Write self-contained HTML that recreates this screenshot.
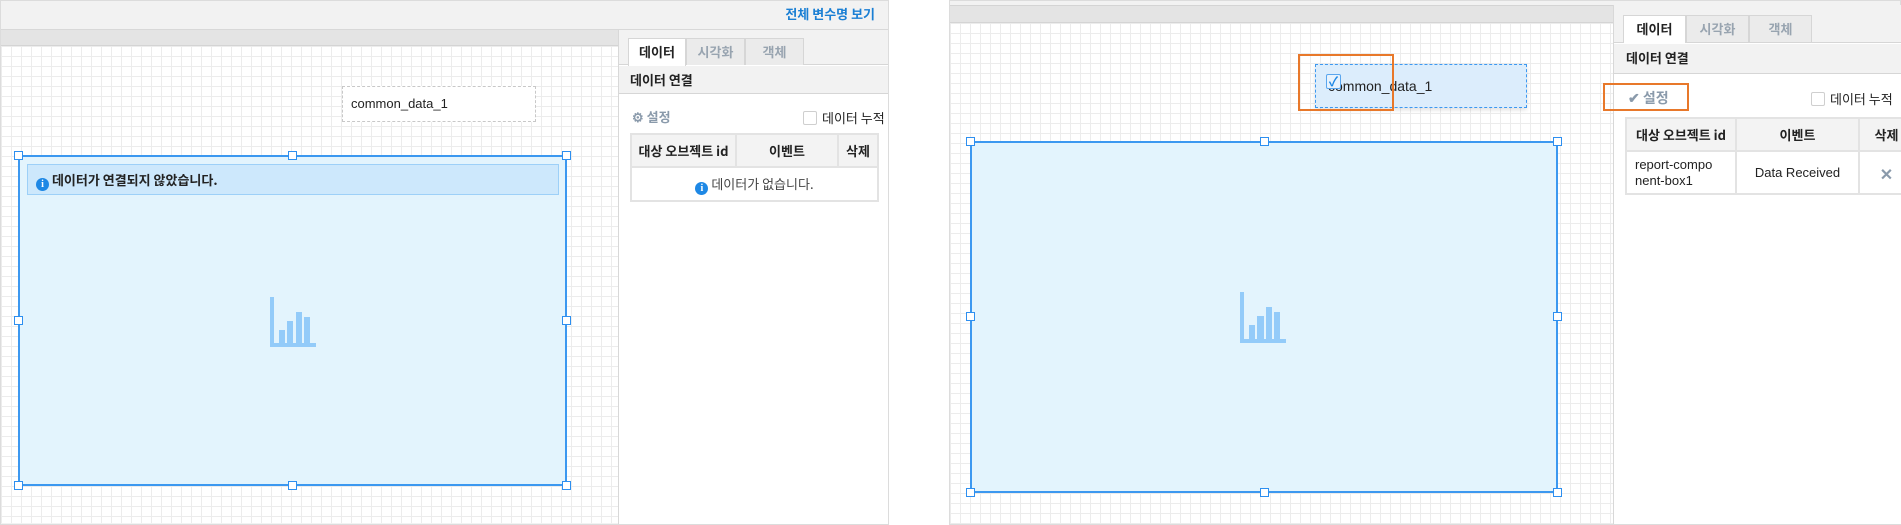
<!DOCTYPE html>
<html><head><meta charset="utf-8">
<style>
*{box-sizing:border-box;margin:0;padding:0}
body{width:1901px;height:525px;background:#fff;position:relative;overflow:hidden;font-family:"Liberation Sans","Noto Sans CJK KR",sans-serif;color:#222}
.a{position:absolute}
.grid{background-color:#fff;background-image:linear-gradient(#ececec 1px,transparent 1px),linear-gradient(90deg,#ececec 1px,transparent 1px);background-size:10px 10px}
.h{position:absolute;width:9px;height:9px;background:#fff;border:1.5px solid #2d8ff0}
.tab{position:absolute;height:27px;border:1px solid #d6d6d6;border-bottom:none;background:#ebebeb;color:#98a4b0;font-size:13px;font-weight:bold;text-align:center;line-height:25px;font-family:"Noto Sans CJK KR",sans-serif}
.tab.on{background:#fff;color:#222;height:28px}
.k{font-family:"Noto Sans CJK KR",sans-serif;font-weight:bold;font-size:13px}
table{border-collapse:collapse;position:absolute;font-family:"Noto Sans CJK KR",sans-serif;font-size:13px}
td,th{border:2px solid #e3e3e3;text-align:center}
th{background:#f3f3f3;font-weight:bold;height:33px}
.cb{position:absolute;width:14px;height:14px;border:1px solid #cfcfcf;border-radius:2px;background:#fff}
.info{display:inline-block;width:13px;height:13px;border-radius:50%;background:#1e88e5;color:#fff;font-size:10px;font-weight:bold;text-align:center;line-height:13px;font-family:"Liberation Serif",serif;vertical-align:-2px}
</style></head><body>

<!-- LEFT SCREEN -->
<div class="a" style="left:0;top:0;width:889px;height:525px;border:1px solid #dcdcdc;background:#f2f2f2"></div>
<div class="a k" style="left:700px;top:4px;width:175px;text-align:right;color:#1a7fd4;font-size:13px">전체 변수명 보기</div>
<div class="a" style="left:1px;top:29px;width:887px;height:1px;background:#d8d8d8"></div>
<div class="a" style="left:1px;top:30px;width:617px;height:16px;background:#e4e4e4;border-bottom:1px solid #d4d4d4"></div>
<div class="a grid" style="left:1px;top:46px;width:617px;height:477px"></div>
<div class="a" style="left:342px;top:86px;width:194px;height:36px;border:1px dashed #c8c8c8;background:#fff;font-size:13px;line-height:34px;padding-left:8px">common_data_1</div>
<div class="a" style="left:18px;top:155px;width:549px;height:331px;border:2px solid #3c98f0;background:#e3f4fd"></div>
<div class="a k" style="left:27px;top:164px;width:532px;height:31px;background:#cde8fc;border:1px solid #9dd0f8;line-height:29px;padding-left:8px"><span class="info">i</span> 데이터가 연결되지 않았습니다.</div>
<svg class="a" style="left:270px;top:297px" width="46" height="50" viewBox="0 0 46 50"><g fill="#93cbf9"><rect x="0" y="0" width="4" height="50"/><rect x="0" y="46" width="46" height="4"/><rect x="9" y="33" width="6" height="14"/><rect x="17" y="24" width="6" height="23"/><rect x="26" y="15" width="6" height="32"/><rect x="34" y="20" width="6" height="27"/></g></svg>
<div class="h" style="left:14px;top:151px"></div><div class="h" style="left:288px;top:151px"></div><div class="h" style="left:562px;top:151px"></div>
<div class="h" style="left:14px;top:316px"></div><div class="h" style="left:562px;top:316px"></div>
<div class="h" style="left:14px;top:481px"></div><div class="h" style="left:288px;top:481px"></div><div class="h" style="left:562px;top:481px"></div>

<div class="a" style="left:618px;top:30px;width:270px;height:494px;background:#fff;border-left:1px solid #d8d8d8"></div>
<div class="a" style="left:619px;top:30px;width:269px;height:35px;background:#f2f2f2;border-bottom:1px solid #d6d6d6"></div>
<div class="tab on" style="left:628px;top:38px;width:58px">데이터</div>
<div class="tab" style="left:686px;top:38px;width:59px">시각화</div>
<div class="tab" style="left:745px;top:38px;width:59px">객체</div>
<div class="a k" style="left:619px;top:66px;width:269px;height:28px;background:#f2f2f2;border-bottom:1px solid #d6d6d6;line-height:27px;padding-left:11px">데이터 연결</div>
<div class="a k" style="left:632px;top:107px;color:#8a9aab">⚙ 설정</div>
<div class="cb" style="left:803px;top:111px"></div>
<div class="a k" style="left:822px;top:108px;font-weight:normal">데이터 누적</div>
<table style="left:630px;top:133px;width:249px">
<tr><th style="width:105px">대상 오브젝트 id</th><th style="width:102px">이벤트</th><th>삭제</th></tr>
<tr><td colspan="3" style="height:34px;color:#444"><span class="info">i</span> 데이터가 없습니다.</td></tr>
</table>

<!-- RIGHT SCREEN -->
<div class="a" style="left:949px;top:0;width:952px;height:525px;border:1px solid #dcdcdc;background:#f2f2f2"></div>
<div class="a" style="left:950px;top:5px;width:663px;height:18px;background:#e4e4e4;border-top:1px solid #d4d4d4;border-bottom:1px solid #d4d4d4"></div>
<div class="a grid" style="left:950px;top:23px;width:663px;height:501px"></div>
<div class="a" style="left:1315px;top:64px;width:212px;height:44px;border:1.5px dashed #3c98f0;background:#dcedfc;font-size:14px;line-height:42px;padding-left:12px;box-shadow:0 2px 4px rgba(0,0,0,.12)">common_data_1</div>
<div class="a" style="left:1326px;top:74px;width:15px;height:15px;border:1px solid #5aa6ee;border-radius:2px;background:#e8f3fd;color:#1e88e5;font-size:13px;line-height:13px;text-align:center;font-weight:bold">✓</div>
<div class="a" style="left:1298px;top:54px;width:96px;height:57px;border:2px solid #e8782a"></div>
<div class="a" style="left:970px;top:141px;width:588px;height:352px;border:2px solid #3c98f0;background:#e3f4fd"></div>
<svg class="a" style="left:1240px;top:292px" width="46" height="51" viewBox="0 0 46 51"><g fill="#93cbf9"><rect x="0" y="0" width="4" height="51"/><rect x="0" y="47" width="46" height="4"/><rect x="9" y="33" width="6" height="15"/><rect x="17" y="24" width="7" height="24"/><rect x="26" y="15" width="6" height="33"/><rect x="34" y="20" width="6" height="28"/></g></svg>
<div class="h" style="left:966px;top:137px"></div><div class="h" style="left:1260px;top:137px"></div><div class="h" style="left:1553px;top:137px"></div>
<div class="h" style="left:966px;top:312px"></div><div class="h" style="left:1553px;top:312px"></div>
<div class="h" style="left:966px;top:488px"></div><div class="h" style="left:1260px;top:488px"></div><div class="h" style="left:1553px;top:488px"></div>

<div class="a" style="left:1613px;top:5px;width:288px;height:519px;background:#fff;border-left:1px solid #d8d8d8"></div>
<div class="a" style="left:1614px;top:5px;width:287px;height:38px;background:#f2f2f2;border-bottom:1px solid #d6d6d6"></div>
<div class="tab on" style="left:1623px;top:15px;width:63px">데이터</div>
<div class="tab" style="left:1686px;top:15px;width:63px">시각화</div>
<div class="tab" style="left:1749px;top:15px;width:63px">객체</div>
<div class="a k" style="left:1614px;top:44px;width:287px;height:30px;background:#f2f2f2;border-bottom:1px solid #d6d6d6;line-height:28px;padding-left:12px">데이터 연결</div>
<div class="a k" style="left:1628px;top:88px;color:#8a9aab;font-size:14px">✔ 설정</div>
<div class="a" style="left:1603px;top:83px;width:86px;height:28px;border:2px solid #e8782a"></div>
<div class="cb" style="left:1811px;top:92px"></div>
<div class="a k" style="left:1830px;top:89px;font-weight:normal">데이터 누적</div>
<table style="left:1625px;top:117px;width:290px">
<tr><th style="width:110px">대상 오브젝트 id</th><th style="width:123px">이벤트</th><th>삭제</th></tr>
<tr><td style="height:43px;text-align:left;padding-left:8px;line-height:16px;font-family:'Liberation Sans',sans-serif">report-compo<br>nent-box1</td><td style="font-family:'Liberation Sans',sans-serif">Data Received</td><td style="color:#8a9aab;font-size:16px;font-weight:bold">✕</td></tr>
</table>
</body></html>
